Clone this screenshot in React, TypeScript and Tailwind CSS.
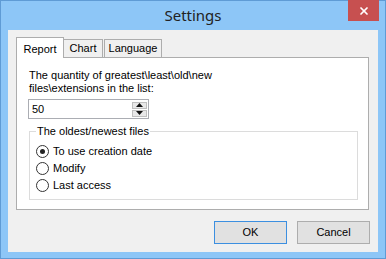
import { X } from "lucide-react";

const font = { fontFamily: '"Liberation Sans", Arial, sans-serif' };

function Radio({ label, checked }: { label: string; checked?: boolean }) {
	return (
		<div className="flex h-[17px] items-center">
			<span className="flex size-[13px] items-center justify-center rounded-full border border-[#333] bg-white">
				{checked && <span className="size-[5px] rounded-full bg-[#222]" />}
			</span>
			<span className="ml-[4px] leading-[13px]">{label}</span>
		</div>
	);
}

function Spinner() {
	return (
		<div className="mr-[1px] flex flex-col gap-[1px]">
			<div className="flex h-[7px] w-[15px] items-center justify-center border border-[#bfbfbf] bg-[#e8e8e8]">
				<svg width="7" height="4" viewBox="0 0 7 4">
					<path d="M0 4 L3.5 0 L7 4 Z" fill="#111" />
				</svg>
			</div>
			<div className="flex h-[7px] w-[15px] items-center justify-center border border-[#bfbfbf] bg-[#e8e8e8]">
				<svg width="7" height="4" viewBox="0 0 7 4">
					<path d="M0 0 L3.5 4 L7 0 Z" fill="#111" />
				</svg>
			</div>
		</div>
	);
}

export default function App() {
	return (
		<div
			className="relative flex h-[259px] w-[386px] flex-col border border-[#5f9bd5] bg-[#8dc6f7] text-[11px] text-black"
			style={font}
		>
			{/* title bar */}
			<div className="flex h-[29px] items-center justify-center">
				<span
					className="text-[15px] text-[#222]"
					style={{ fontFamily: '"Noto Sans", "Open Sans", sans-serif' }}
				>
					Settings
				</span>
			</div>
			<div className="absolute top-[-1px] right-[6px] flex h-[21px] w-[31px] items-center justify-center bg-[#c75050]">
				<X size={12} strokeWidth={3.5} color="#fff" />
			</div>

			{/* client */}
			<div className="mx-[7px] flex h-[222px] flex-col bg-[#f0f0f0] pt-[7px] pl-[8px]">
				{/* tabs */}
				<div className="flex items-end">
					<div className="relative z-10 -mb-px flex h-[21px] w-[48px] items-start justify-center border border-b-0 border-[#adadad] bg-white pt-[3px]">
						Report
					</div>
					<div className="flex h-[18px] w-[39px] items-center justify-center border border-b-0 border-l-0 border-[#adadad] bg-[#f0f0f0]">
						Chart
					</div>
					<div className="ml-[1px] flex h-[18px] w-[58px] items-center justify-center border border-b-0 border-[#adadad] bg-[#f0f0f0]">
						Language
					</div>
				</div>

				{/* panel */}
				<div className="flex h-[153px] w-[353px] flex-col border border-[#adadad] bg-white pt-[11px] pl-[12px]">
					<p className="leading-[13px]">
						The quantity of greatest\least\old\new
						<br />
						files\extensions in the list:
					</p>
					<div className="-ml-px mt-[4px] flex h-[20px] w-[121px] items-center justify-between border border-[#abadb3] bg-white pl-[3px]">
						<span>50</span>
						<Spinner />
					</div>

					<div className="relative mt-[12px] h-[69px] w-[329px] border border-[#dcdcdc] pt-[11px] pl-[6px]">
						<span className="absolute top-[-7px] left-[6px] bg-white px-[1px] leading-[13px]">
							The oldest/newest files
						</span>
						<Radio label="To use creation date" checked />
						<Radio label="Modify" />
						<Radio label="Last access" />
					</div>
				</div>

				{/* buttons */}
				<div className="mt-[11px] mr-[8px] flex justify-end gap-[10px]">
					<button className="flex h-[23px] w-[73px] items-center justify-center border border-[#3c8fe0] bg-[#e1e1e1]">
						OK
					</button>
					<button className="flex h-[23px] w-[73px] items-center justify-center border border-[#adadad] bg-[#e1e1e1]">
						Cancel
					</button>
				</div>
			</div>
		</div>
	);
}
